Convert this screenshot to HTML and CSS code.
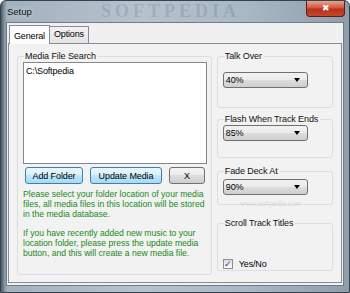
FILE: index.html
```html
<!DOCTYPE html>
<html lang="en">
<head>
  <meta charset="UTF-8">
  <title>Setup</title>
  <link rel="stylesheet" href="styles.css">
</head>
<body>
  <div class="window">
    <!-- Title bar -->
    <div class="titlebar">
      <span class="title">Setup</span>
      <span class="watermark">SOFTPEDIA</span>
      <div class="close-btn">&#x2716;</div>
    </div>

    <div class="client">
      <div class="tabs">
        <div class="tab active">General</div>
        <div class="tab">Options</div>
      </div>

      <div class="panel">
        <fieldset class="group media-group">
          <legend>Media File Search</legend>
          <div class="listbox">
            <div class="list-item">C:\Softpedia</div>
          </div>
          <div class="button-row">
            <button class="btn focus add-btn">Add Folder</button>
            <button class="btn focus update-btn">Update Media</button>
            <button class="btn clear-btn">X</button>
          </div>
          <p class="note">Please select your folder location of your media files, all media files in this location will be stored in the media database.</p>
          <p class="note">If you have recently added new music to your location folder, please press the update media button, and this will create a new media file.</p>
        </fieldset>

        <div class="side">
          <fieldset class="group talk-group">
            <legend>Talk Over</legend>
            <div class="combo"><span>40%</span><span class="arrow"></span></div>
          </fieldset>
          <fieldset class="group flash-group">
            <legend>Flash When Track Ends</legend>
            <div class="combo"><span>85%</span><span class="arrow"></span></div>
          </fieldset>
          <fieldset class="group fade-group">
            <legend>Fade Deck At</legend>
            <div class="combo"><span>90%</span><span class="arrow"></span></div>
            <span class="ghost">www.softpedia.com</span>
          </fieldset>
          <fieldset class="group scroll-group">
            <legend>Scroll Track Titles</legend>
            <label class="check"><span class="box">&#x2713;</span>Yes/No</label>
          </fieldset>
        </div>
      </div>
    </div>
  </div>
</body>
</html>
```

FILE: styles.css
```css
body {
  margin: 0;
  padding: 0;
  width: 350px;
  height: 293px;
  overflow: hidden;
  font-family: "Liberation Sans", Arial, sans-serif;
  font-size: 8px;
  letter-spacing: -0.15px;
  color: #000;
}

.window {
  width: 350px;
  height: 293px;
  box-sizing: border-box;
  padding: 0 5px 6px 5px;
  background: linear-gradient(90deg, #4b5864 0px, #7d8d9a 3px, #a2b1be 6px, #b5c3ce 40%, #a9b8c5 70%, #8d9dab 100%);
  border: 1px solid #36424d;
  border-radius: 6px 6px 0 0;
  display: flex;
  flex-direction: column;
}

.titlebar {
  height: 21px;
  position: relative;
  display: flex;
  align-items: center;
}

.title {
  font-size: 9.5px;
  letter-spacing: 0;
  padding-left: 1px;
  color: #111;
  text-shadow: 0 0 6px #e8eef3;
  position: relative;
  z-index: 1;
}

.watermark {
  position: absolute;
  left: 95px;
  top: 0;
  line-height: 21px;
  font-family: "Liberation Serif", serif;
  font-size: 18px;
  font-weight: bold;
  letter-spacing: 4px;
  color: rgba(80, 100, 120, 0.22);
}

.close-btn {
  position: absolute;
  right: -1px;
  top: 0;
  width: 39px;
  height: 16px;
  border: 1px solid #5a2018;
  border-top: none;
  border-radius: 0 0 4px 4px;
  background: linear-gradient(#e5a593, #d3573d 45%, #b9301a 55%, #c8462b);
  color: #fff;
  font-size: 9px;
  text-align: center;
  line-height: 15px;
  box-sizing: border-box;
  z-index: 1;
}

.client {
  flex: 1;
  background: #f0f0f0;
  padding: 2px 1px 2px 1px;
  display: flex;
  flex-direction: column;
  border: 1px solid #6e7c88;
}

.tabs {
  display: flex;
  padding-left: 1px;
  height: 18px;
  align-items: flex-end;
}

.tab {
  border: 1px solid #898c95;
  border-bottom: none;
  padding: 0 4px;
  height: 16px;
  line-height: 15px;
  font-size: 9px;
  background: linear-gradient(#f2f2f2, #e3e3e3);
  margin-left: -1px;
}

.tab.active {
  height: 18px;
  line-height: 20px;
  background: #fcfcfc;
  position: relative;
  z-index: 1;
  margin-bottom: -1px;
  margin-left: 0;
}

.panel {
  flex: 1;
  border: 1px solid #898c95;
  background: #f2f2f2;
  display: flex;
  gap: 5px;
  padding: 7px 8px 7px 8px;
}

.group {
  margin: 0;
  border: 1px solid #d5dfe5;
  border-radius: 3px;
  padding: 0 5px;
  min-width: 0;
}

.group legend {
  padding: 0 2px 0 1px;
  margin-left: 1px;
  font-size: 9px;
  letter-spacing: -0.1px;
  color: #111;
}

.media-group {
  width: 196px;
  box-sizing: border-box;
  padding: 1px 4px 0 5px;
}

.listbox {
  height: 102px;
  background: #fff;
  border: 1px solid #828790;
  padding: 3px 2px;
  box-sizing: border-box;
}

.list-item {
  font-size: 9px;
}

.button-row {
  display: flex;
  margin: 3px 0 0 2px;
  gap: 7px;
}

.btn {
  height: 17px;
  font-family: "Liberation Sans", Arial, sans-serif;
  font-size: 9px;
  letter-spacing: -0.1px;
  padding: 0;
  border: 1px solid #707070;
  border-radius: 3px;
  background: linear-gradient(#f2f2f2 0%, #ebebeb 49%, #dddddd 50%, #cfcfcf 100%);
  color: #000;
}

.btn.focus {
  border-color: #3c7fb1;
  background: linear-gradient(#eaf6fd 0%, #d9f0fc 49%, #bee6fd 50%, #a7d9f5 100%);
}

.add-btn {
  width: 58px;
}

.update-btn {
  width: 72px;
}

.clear-btn {
  width: 36px;
}

.note {
  margin: 5px 0 0 0;
  padding-right: 2px;
  color: #178a17;
  line-height: 10px;
  font-size: 8.6px;
  letter-spacing: 0;
}

.note + .note {
  margin-top: 9px;
}

.side {
  width: 117px;
  display: flex;
  flex-direction: column;
}

.talk-group {
  height: 57px;
  box-sizing: border-box;
  padding-top: 11px;
}

.flash-group {
  height: 44px;
  margin-top: 6px;
  box-sizing: border-box;
  padding-top: 1px;
}

.fade-group {
  height: 39px;
  margin-top: 8px;
  box-sizing: border-box;
  padding-top: 3px;
  position: relative;
}

.scroll-group {
  height: 53px;
  margin-top: 13px;
  box-sizing: border-box;
  padding-top: 31px;
}

.combo {
  width: 85px;
  height: 16px;
  box-sizing: border-box;
  border: 1px solid #707070;
  border-radius: 3px;
  background: linear-gradient(#f2f2f2 0%, #ebebeb 49%, #dddddd 50%, #cfcfcf 100%);
  display: flex;
  align-items: center;
  justify-content: space-between;
  padding: 0 7px 0 2px;
  font-size: 9px;
}

.arrow {
  width: 0;
  height: 0;
  border-left: 3.5px solid transparent;
  border-right: 3.5px solid transparent;
  border-top: 4px solid #000;
}

.ghost {
  position: absolute;
  left: 22px;
  top: 23px;
  font-family: "Liberation Serif", serif;
  font-size: 8px;
  color: rgba(120, 120, 120, 0.22);
  white-space: nowrap;
}

.check {
  display: flex;
  align-items: center;
  gap: 6px;
  font-size: 9px;
}

.box {
  width: 10px;
  height: 10px;
  box-sizing: border-box;
  border: 1px solid #8e8f8f;
  background: linear-gradient(#dcdcdc, #fbfbfb);
  color: #2a3d9c;
  font-size: 9px;
  line-height: 8px;
  text-align: center;
}
```
